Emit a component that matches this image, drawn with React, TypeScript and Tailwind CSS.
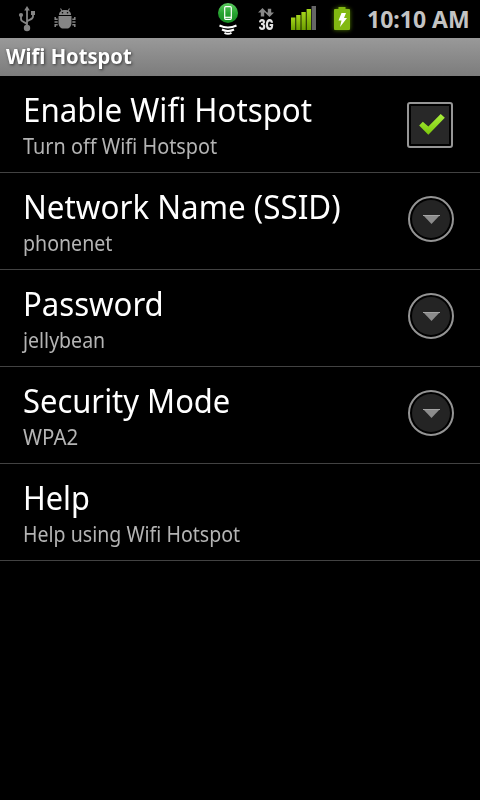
import React from 'react';

interface Setting {
  title: string;
  summary: string;
  control?: 'checkbox' | 'more';
  titleScale: string;
  summaryScale: string;
}

const settings: Setting[] = [
  { title: 'Enable Wifi Hotspot', summary: 'Turn off Wifi Hotspot', control: 'checkbox', titleScale: 'scale-x-[0.947]', summaryScale: 'scale-x-[0.902]' },
  { title: 'Network Name (SSID)', summary: 'phonenet', control: 'more', titleScale: 'scale-x-[0.95]', summaryScale: 'scale-x-[0.89]' },
  { title: 'Password', summary: 'jellybean', control: 'more', titleScale: 'scale-x-[0.943]', summaryScale: 'scale-x-[0.888]' },
  { title: 'Security Mode', summary: 'WPA2', control: 'more', titleScale: 'scale-x-[0.937]', summaryScale: 'scale-x-[0.93]' },
  { title: 'Help', summary: 'Help using Wifi Hotspot', titleScale: 'scale-x-[0.93]', summaryScale: 'scale-x-[0.889]' },
];

const UsbIcon = () => (
  <svg className="ml-[18px] h-[26px] w-[18px] shrink-0" viewBox="0 0 18 26" fill="none" stroke="#858585" strokeWidth="1.8">
    <path d="M9 4v18M9 18.5C8 15.5 3 16.5 3 13v-3M9 15.500C10 13.500 15 14 15 10.500V8" />
    <path d="M9 0l2.800 4.500H6.200z" fill="#858585" stroke="none" />
    <circle cx="9" cy="22" r="3.200" fill="#858585" stroke="none" />
    <circle cx="3" cy="9" r="2.100" fill="#858585" stroke="none" />
    <rect x="13" y="5" width="4" height="4" fill="#858585" stroke="none" />
  </svg>
);

const BugIcon = () => (
  <svg className="ml-[17.500px] h-[22px] w-[22px] shrink-0" viewBox="0 0 22 22" fill="#858585">
    <path d="M5 7C5 3.800 7.500 2 11 2s6 1.800 6 5z" />
    <path d="M8 3L6.500 .5M14 3l1.500-2.500" stroke="#858585" strokeWidth="1.100" />
    <circle cx="8.500" cy="4.800" r=".8" fill="#000" />
    <circle cx="13.500" cy="4.800" r=".8" fill="#000" />
    <path d="M4.500 8h13v7c0 3.500-2.500 5.500-4.500 5.500h-4C7 20.500 4.500 18.500 4.500 15z" />
    <path d="M3.700 11.300H1.200V9M3.700 14H.5M3.700 16.700H1.200v2.300M18.300 11.300h2.500V9M18.300 14h3.200M18.300 16.700h2.500v2.300" fill="none" stroke="#858585" strokeWidth="1.500" />
  </svg>
);

const TetherIcon = () => (
  <svg className="h-[34px] w-[24px] shrink-0" viewBox="0 0 24 34">
    <defs>
      <linearGradient id="tether" x1="0" y1="0" x2="0" y2="1">
        <stop offset="0" stopColor="#5fcb62" />
        <stop offset=".5" stopColor="#27a431" />
        <stop offset="1" stopColor="#168a22" />
      </linearGradient>
    </defs>
    <circle cx="12" cy="11" r="10" fill="url(#tether)" />
    <rect x="8.700" y="4.700" width="6.600" height="12.600" rx="1" fill="none" stroke="#fff" strokeWidth="1.200" />
    <path d="M8.500 15.300h7" stroke="#fff" strokeWidth="1.200" />
    <path d="M3.500 23.500q8.500 4 17 0M6 27.500q6 3 12 0M8.500 30.800q3.500 2 7 0" fill="none" stroke="#fff" strokeWidth="2" />
  </svg>
);

const DataIcon = () => (
  <div className="ml-[18px] flex w-[16px] shrink-0 flex-col items-center">
    <svg className="h-[9px] w-[16px]" viewBox="0 0 16 9">
      <path d="M4.500 0L9 4.500H6.200v4H2.800v-4H0zM11.500 9L7 4.500h2.800V.8h3.400v3.700H16z" fill="#878787" />
    </svg>
    <span className="h-[13px] scale-x-[0.76] font-['Inter',sans-serif] text-[14px] leading-[15px] font-black text-[#e2e2e2]">3G</span>
  </div>
);

const SignalIcon = () => (
  <svg className="-mt-[2px] ml-[17px] h-[24px] w-[26px] shrink-0" viewBox="0 0 26 24">
    <defs>
      <linearGradient id="signal" x1="0" y1="0" x2="0" y2="1">
        <stop offset="0" stopColor="#a4d51b" />
        <stop offset="1" stopColor="#6d9f00" />
      </linearGradient>
    </defs>
    <rect x="0" y="11.500" width="4.400" height="12.500" fill="url(#signal)" />
    <rect x="5.200" y="9" width="4.400" height="15" fill="url(#signal)" />
    <rect x="10.400" y="6" width="4.400" height="18" fill="url(#signal)" />
    <rect x="15.600" y="3" width="4.400" height="21" fill="url(#signal)" />
    <rect x="20.600" y="0" width="4.400" height="24" fill="#666" />
  </svg>
);

const BatteryIcon = () => (
  <svg className="ml-[15px] h-[26px] w-[20px] shrink-0 drop-shadow-[0_0_2px_#527d00]" viewBox="0 0 20 26">
    <path d="M3 3h3.500V1h7v2H17q1 0 1 1v19q0 1-1 1H3q-1 0-1-1V4q0-1 1-1z" fill="#82b911" />
    <path d="M9.500 7h4.500l-2 5h3L8 21l1.500-6.500H6.500z" fill="#fff" />
  </svg>
);

const CheckBox = () => (
  <div className="flex h-[46px] w-[46px] items-center justify-center rounded-[3px] border-2 border-[#969696] bg-black">
    <div className="flex h-[38px] w-[38px] items-center justify-center bg-[#282828]">
      <svg className="ml-[3px] h-[22px] w-[28px]" viewBox="0 0 30 24">
        <defs>
          <linearGradient id="check" x1="0" y1="0" x2="0" y2="1">
            <stop offset="0" stopColor="#aaf03c" />
            <stop offset="1" stopColor="#7cc70c" />
          </linearGradient>
        </defs>
        <path d="M1 12.500L5 8.500l6 5L24.500 0 29 4 11 22.500z" fill="url(#check)" />
      </svg>
    </div>
  </div>
);

const MoreButton = () => (
  <div className="flex h-[46px] w-[46px] items-center justify-center rounded-full border-2 border-[#949494] bg-black">
    <div className="flex h-[38px] w-[38px] items-center justify-center rounded-full bg-[#242424]">
      <svg className="h-[9px] w-[17px]" viewBox="0 0 17 9">
        <path d="M0 0h17L8.500 9z" fill="#8c8c8c" />
        <path d="M0 .5h17" stroke="#a4a4a4" />
      </svg>
    </div>
  </div>
);

const SettingRow = ({ setting }: { setting: Setting }) => (
  <div className="flex h-[97px] items-start justify-between border-b border-[#424242] pr-[26px] pl-[23px]">
    <div className="pt-[15px] whitespace-nowrap">
      <h2 className={`w-fit origin-left text-[33px] leading-[38px] text-white ${setting.titleScale}`}>{setting.title}</h2>
      <p className={`w-fit origin-left text-[22px] leading-[33px] text-[#b4b4b4] ${setting.summaryScale}`}>{setting.summary}</p>
    </div>
    {setting.control === 'checkbox' && <div className="mr-px pt-[26px]"><CheckBox /></div>}
    {setting.control === 'more' && <div className="pt-[23px]"><MoreButton /></div>}
  </div>
);

const App: React.FC = () => {
  return (
    <div className="h-[800px] w-[480px] overflow-hidden bg-black font-['Noto_Sans',sans-serif]">
      {/* Status bar */}
      <div className="flex h-[38px] items-center justify-between">
        <div className="flex items-center">
          <UsbIcon />
          <BugIcon />
        </div>
        <div className="flex items-center pr-[11px]">
          <TetherIcon />
          <DataIcon />
          <SignalIcon />
          <BatteryIcon />
          <span className="ml-[15px] w-[102px] text-[23px] leading-[38px] font-bold whitespace-nowrap text-[#c3c3c3]">
            10:10 AM
          </span>
        </div>
      </div>

      {/* Title bar */}
      <div className="h-[38px] bg-linear-to-b from-[#999] to-[#7c7c7c] pl-[6px]">
        <h1 className="w-fit origin-left scale-x-[0.985] text-[20.5px] leading-[37px] font-bold text-white [text-shadow:1px_1px_3px_#333]">
          Wifi Hotspot
        </h1>
      </div>

      {settings.map((setting) => (
        <SettingRow key={setting.title} setting={setting} />
      ))}
    </div>
  );
};

export default App;
